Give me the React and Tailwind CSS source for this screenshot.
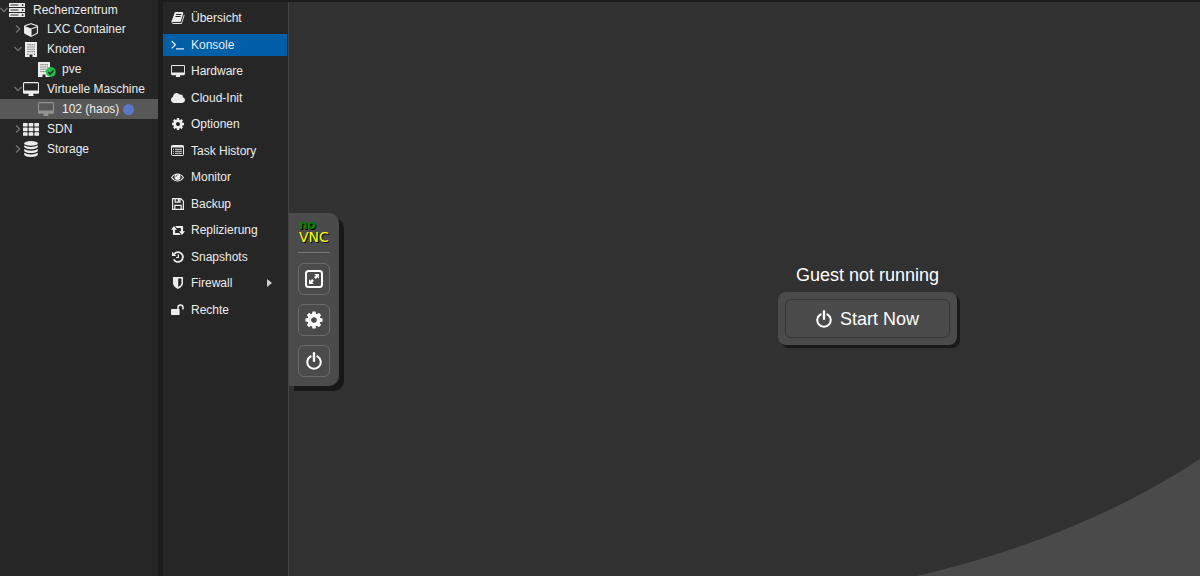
import { useState } from 'react';
import { FaCloud } from 'react-icons/fa';

function ServerIcon() {
  return (
    <svg viewBox="0 0 16 14" className="h-[14px] w-4">
      {[0, 5, 10].map((y) => (
        <g key={y}>
          <rect y={y} width="16" height="4" rx="0.6" fill="currentColor" />
          <path d={`M1.5 ${y + 2}h8`} stroke="#262626" strokeWidth="1" />
          <circle cx="13.6" cy={y + 2} r="0.9" fill="#262626" />
        </g>
      ))}
    </svg>
  );
}

function CubeIcon() {
  return (
    <svg viewBox="0 0 1664 1792" className="h-[15px] w-[14px]" fill="currentColor">
      <path d="M896 1629l640-349v-636l-640 233v752zm-64-865l698-254-698-254-698 254zm832-252v768q0 35-18 65t-49 47l-704 384q-28 16-61 16t-61-16l-704-384q-31-17-49-47t-18-65v-768q0-40 23-73t61-47l704-256q22-8 44-8t44 8l704 256q38 14 61 47t23 73z" />
    </svg>
  );
}

function BuildingIcon() {
  return (
    <svg viewBox="0 0 12 15" className="h-[15px] w-3">
      <path d="M0 0h12v15H7.500v-2.500h-3V15H0z" fill="currentColor" />
      <path d="M2.500 2.700h7.500M2.500 5h7.500M2.500 7.300h7.500M2.500 9.600h7.500" stroke="#262626" strokeWidth="0.900" strokeDasharray="1 1.050" />
      <path d="M2.200 12.200h1.100M8.900 12.200h1.100" stroke="#262626" strokeWidth="0.900" />
    </svg>
  );
}

function NodeOnlineIcon() {
  return (
    <svg viewBox="0 0 18 15" className="h-[15px] w-[18px]">
      <path d="M0 0h12v15H7.500v-2.500h-3V15H0z" fill="currentColor" />
      <path d="M2.500 2.700h7.500M2.500 5h7.500M2.500 7.300h7.500M2.500 9.600h7.500" stroke="#262626" strokeWidth="0.900" strokeDasharray="1 1.050" />
      <circle cx="12.800" cy="10" r="4.900" fill="#21bf4b" />
      <path d="M10.400 10.200l1.800 1.800 3.200-3.500" fill="none" stroke="#262626" strokeWidth="1.600" />
    </svg>
  );
}

function DesktopIcon({ className = 'h-[14px] w-4' }) {
  return (
    <svg viewBox="-64 0 1920 1664" className={className} fill="currentColor">
      <path d="M1728 992v-832q0-13-9.5-22.5t-22.5-9.5h-1600q-13 0-22.5 9.5t-9.5 22.5v832q0 13 9.5 22.5t22.5 9.5h1600q13 0 22.5-9.5t9.5-22.5zm128-832v1088q0 66-47 113t-113 47h-544q0 37 16 77.5t32 71 16 43.5q0 26-19 45t-45 19h-512q-26 0-45-19t-19-45q0-14 16-44t32-70 16-78h-544q-66 0-113-47t-47-113v-1088q0-66 47-113t113-47h1600q66 0 113 47t47 113z" />
    </svg>
  );
}

function GridIcon() {
  return (
    <svg viewBox="0 0 16 13" className="h-[13px] w-4" fill="currentColor">
      {[0, 4.6, 9.2].map((y) => [0, 5.7, 11.4].map((x) => <rect key={`${x}-${y}`} x={x} y={y} width="4.6" height="3.6" rx="0.6" />))}
    </svg>
  );
}

function DatabaseIcon() {
  return (
    <svg viewBox="0 0 14 16" className="h-4 w-[14px]" fill="currentColor">
      <ellipse cx="7" cy="2.4" rx="6.8" ry="2.4" />
      <path d="M.2 4.2q2.4 1.7 6.8 1.7t6.8-1.7v1.9Q12.4 8.200 7 8.200T.2 6.100z" />
      <path d="M.2 8q2.400 1.700 6.800 1.700t6.800-1.700v1.900Q12.400 12 7 12T.2 9.900z" />
      <path d="M.2 11.800q2.400 1.700 6.800 1.700t6.800-1.700v1.900Q12.400 15.900 7 15.900T.2 13.700z" />
    </svg>
  );
}

function BookIcon() {
  return (
    <svg viewBox="0 0 1792 1792" className="h-[14px] w-[14px]" fill="currentColor">
      <path d="M1703 478q40 57 18 129l-275 906q-19 64-76.5 107.5t-122.5 43.5h-923q-77 0-148.5-53.5t-99.5-131.500q-24-67-2-127 0-4 3-27t4-37q1-8-3-21.500t-3-19.500q2-11 8-21t16.500-23.500 16.500-23.500q23-38 45-91.500t30-91.500q3-10 .5-30t-.5-28q3-11 17-28t17-23q21-36 42-92t25-90q1-9-2.500-32t.5-28q4-13 22-30.500t22-22.500q19-26 42.500-84.500t27.500-96.500q1-8-3-25.500t-2-26.500q2-8 9-18t18-23 17-21q8-12 16.500-30.500t15-35 16-36 19.500-32 26.500-23.500 36-11.500 47.500 5.500l-1 3q38-9 51-9h761q74 0 114 56t18 130l-274 906q-36 119-71.500 153.500t-128.500 34.500h-869q-27 0-38 15-11 16-1 43 24 70 144 70h923q29 0 56-15.500t35-41.500l300-987q7-22 5-57 38 15 59 43zm-1064 2q-4 13 2 22.500t20 9.500h608q13 0 25.500-9.500t16.500-22.500l21-64q4-13-2-22.500t-20-9.500h-608q-13 0-25.500 9.500t-16.500 22.500zm-83 256q-4 13 2 22.500t20 9.500h608q13 0 25.500-9.500t16.500-22.500l21-64q4-13-2-22.500t-20-9.500h-608q-13 0-25.500 9.500t-16.500 22.500z" />
    </svg>
  );
}

function TerminalIcon() {
  return (
    <svg viewBox="0 0 13 10" className="h-[10px] w-[13px]" fill="none" stroke="currentColor" strokeWidth="1.3">
      <path d="M.7 1l3.700 3.700L.7 8.400M5 8.800h8" />
    </svg>
  );
}

function CogIcon({ className = 'h-[14px] w-[14px]' }) {
  return (
    <svg viewBox="0 0 1792 1792" className={className} fill="currentColor">
      <path d="M1152 896q0-106-75-181t-181-75-181 75-75 181 75 181 181 75 181-75 75-181zm512-109v222q0 12-8 23t-20 13l-185 28q-19 54-39 91 35 50 107 138 10 12 10 25t-9 23q-27 37-99 108t-94 71q-12 0-26-9l-138-108q-44 23-91 38-16 136-29 186-7 28-36 28h-222q-14 0-24.500-8.500t-11.500-21.500l-28-184q-49-16-90-37l-141 107q-10 9-25 9-14 0-25-11-126-114-165-168-7-10-7-23 0-12 8-23 15-21 51-66.500t54-70.500q-27-50-41-99l-183-27q-13-2-21-12.500t-8-23.500v-222q0-12 8-23t19-13l186-28q14-46 39-92-40-57-107-138-10-12-10-24 0-10 9-23 26-36 98.500-107.500t94.500-71.500q13 0 26 10l138 107q44-23 91-38 16-136 29-186 7-28 36-28h222q14 0 24.500 8.500t11.500 21.500l28 184q49 16 90 37l142-107q9-9 24-9 13 0 25 10 129 119 165 170 7 8 7 22 0 12-8 23-15 21-51 66.500t-54 70.500q26 50 41 98l183 28q13 2 21 12.500t8 23.500z" />
    </svg>
  );
}

function ListIcon() {
  return (
    <svg viewBox="0 0 13 11" className="h-[11px] w-[13px]" fill="none" stroke="currentColor">
      <rect x="0.500" y="0.500" width="12" height="10" rx="1" />
      <path d="M0.500 1.500h12" strokeWidth="2" />
      <path d="M2 4.300h1M4 4.300h7M2 6.300h1M4 6.300h7M2 8.300h1M4 8.300h7" strokeWidth="0.900" />
    </svg>
  );
}

function EyeIcon() {
  return (
    <svg viewBox="0 0 13 9" className="h-[9px] w-[13px]">
      <path d="M.6 4.500Q3 1 6.500 1t5.900 3.500Q10 8 6.500 8T.6 4.500z" fill="none" stroke="currentColor" strokeWidth="1.100" />
      <circle cx="6.500" cy="3.900" r="3" fill="currentColor" />
      <path d="M4.900 3.900a1.600 1.600 0 0 1 1.600-1.600" fill="none" stroke="#262626" strokeWidth="0.700" />
    </svg>
  );
}

function FloppyIcon() {
  return (
    <svg viewBox="0 0 12 12" className="h-3 w-3" fill="none" stroke="currentColor" strokeWidth="1.200">
      <path d="M.6.6h8.200l2.600 2.600v8.200H.6z" />
      <path d="M2.800 11.200V7.400h6.400v3.800M3.200.8v3.400h4.800V.8" />
      <path d="M6.500.8v3" strokeWidth="1.600" />
    </svg>
  );
}

function RetweetIcon() {
  return (
    <svg viewBox="0 0 14 9" className="h-[9px] w-[14px]" fill="currentColor">
      <path d="M3 0l3 3.700H4.100v3.200h4.100l1.600 2H2.500q-.6 0-.6-.6V3.700H0zM11 9L8 5.300h1.900V2.100H5.800l-1.600-2h7.300q.6 0 .6.600v4.600H14z" />
    </svg>
  );
}

function HistoryIcon() {
  return (
    <svg viewBox="0 0 12 12" className="h-3 w-3" fill="none" stroke="currentColor">
      <path d="M2.100 3.100a4.900 4.900 0 1 1-.4 5.300" strokeWidth="1.800" />
      <path d="M0 .7v4.300h4.300z" fill="currentColor" stroke="none" />
      <path d="M6.400 3.200v3.300H4" strokeWidth="1.200" />
    </svg>
  );
}

function ShieldIcon() {
  return (
    <svg viewBox="0 0 10 12" className="h-3 w-[10px]">
      <path d="M0 0h10v6.200Q10 9.500 5 12 0 9.500 0 6.200z" fill="currentColor" />
      <path d="M5.200 1.600h3.200v4.600q0 2-3.200 3.900z" fill="#262626" />
    </svg>
  );
}

function UnlockIcon() {
  return (
    <svg viewBox="0 0 13 11" className="h-[11px] w-[13px]">
      <rect y="5" width="8.600" height="6" rx="0.700" fill="currentColor" />
      <path d="M7 5.500V3.400a2.500 2.500 0 0 1 5 0v2.100" fill="none" stroke="currentColor" strokeWidth="1.500" />
    </svg>
  );
}

function PowerIcon({ className }) {
  return (
    <svg viewBox="0 0 16 18" className={className} fill="none" stroke="currentColor" strokeWidth="2" strokeLinecap="round">
      <path d="M4.600 4.300a6.700 6.700 0 1 0 6.800 0" />
      <path d="M8 1.300v7.500" strokeWidth="2.400" />
    </svg>
  );
}

function FullscreenIcon() {
  return (
    <svg viewBox="0 0 18 18" className="h-[18px] w-[18px]">
      <rect x="1" y="1" width="16" height="16" rx="2.500" fill="none" stroke="currentColor" strokeWidth="2" />
      <path d="M9.300 4h4.700v4.700l-1.500-1.500-1.700 1.700-1.700-1.700 1.700-1.700zM4 9.300l1.500 1.500 1.700-1.700 1.700 1.700-1.700 1.700L8.700 14H4z" fill="currentColor" />
    </svg>
  );
}

function Chevron({ open }) {
  return (
    <svg viewBox="0 0 8 8" className="h-2 w-2 shrink-0" fill="none" stroke="#777777" strokeWidth="1.2">
      {open ? <path d="M.5 2l3.500 3.700L7.500 2" /> : <path d="M2 .5l3.700 3.500L2 7.500" />}
    </svg>
  );
}

const tree = [
  { label: 'Rechenzentrum', icon: <ServerIcon />, open: true, indent: 'h-[19px] gap-[1px] pl-0' },
  { label: 'LXC Container', icon: <CubeIcon />, open: false, indent: 'h-5 gap-[1px] pl-[14px]' },
  { label: 'Knoten', icon: <BuildingIcon />, open: true, indent: 'h-5 gap-[1px] pl-[14px]' },
  { label: 'pve', icon: <NodeOnlineIcon />, indent: 'h-5 pl-[38px]' },
  { label: 'Virtuelle Maschine', icon: <DesktopIcon />, open: true, indent: 'h-5 gap-[1px] pl-[14px]' },
  { label: '102 (haos)', icon: <DesktopIcon className="h-[14px] w-4 text-[#929292]" />, dot: true, indent: 'h-5 pl-[38px]' },
  { label: 'SDN', icon: <GridIcon />, open: false, indent: 'h-5 gap-[1px] pl-[14px]' },
  { label: 'Storage', icon: <DatabaseIcon />, open: false, indent: 'h-5 gap-[1px] pl-[14px]' },
];

const menu = [
  { label: 'Übersicht', icon: <BookIcon /> },
  { label: 'Konsole', icon: <TerminalIcon /> },
  { label: 'Hardware', icon: <DesktopIcon className="h-3 w-[14px]" /> },
  { label: 'Cloud-Init', icon: <FaCloud className="h-[14px] w-[14px]" /> },
  { label: 'Optionen', icon: <CogIcon /> },
  { label: 'Task History', icon: <ListIcon /> },
  { label: 'Monitor', icon: <EyeIcon /> },
  { label: 'Backup', icon: <FloppyIcon /> },
  { label: 'Replizierung', icon: <RetweetIcon /> },
  { label: 'Snapshots', icon: <HistoryIcon /> },
  { label: 'Firewall', icon: <ShieldIcon />, submenu: true },
  { label: 'Rechte', icon: <UnlockIcon /> },
];

function ResourceTree() {
  const [selected, setSelected] = useState('102 (haos)');

  return (
    <nav className="w-[158px] shrink-0">
      {tree.map((node) => (
        <button
          key={node.label}
          onClick={() => setSelected(node.label)}
          className={`flex w-full items-center whitespace-nowrap ${node.indent} ${selected === node.label ? 'bg-[#585858]' : ''}`}
        >
          {node.open !== undefined ? <Chevron open={node.open} /> : null}
          <span className={`flex shrink-0 items-center ${node.open === undefined ? 'w-6' : 'w-[23px]'}`}>
            <span className={`flex ${node.open === undefined ? '' : 'w-4 justify-center'}`}>{node.icon}</span>
          </span>
          {node.label}
          {node.dot ? <span className="ml-1 h-[11px] w-[11px] rounded-full bg-[#5b78c7]" /> : null}
        </button>
      ))}
    </nav>
  );
}

function SideMenu() {
  const [active, setActive] = useState('Konsole');

  return (
    <nav className="w-[125px] shrink-0 pt-[3px] pr-px">
      <div className="grid h-[318px] auto-rows-fr items-center">
        {menu.map((item) => (
          <button
            key={item.label}
            onClick={() => setActive(item.label)}
            className={`flex h-[22px] w-full items-center pr-[15px] pl-[7px] ${active === item.label ? 'bg-[#005fa6]' : ''}`}
          >
            <span className="mr-[6px] flex w-[15px] justify-center">{item.icon}</span>
            {item.label}
            {item.submenu ? (
              <svg viewBox="0 0 5 8" className="ml-auto h-2 w-[5px]" fill="#d0d0d0">
                <path d="M0 0l5 4-5 4z" />
              </svg>
            ) : null}
          </button>
        ))}
      </div>
    </nav>
  );
}

function ControlButton({ label, children }) {
  return (
    <button aria-label={label} className="flex h-8 w-8 items-center justify-center rounded-md border border-[#6a6a6a] text-white">
      {children}
    </button>
  );
}

function ControlBar() {
  return (
    <aside className="absolute top-[211px] left-0 flex w-[50px] flex-col items-center rounded-r-[10px] bg-[#4b4b4b] pt-[7px] pb-[9px] shadow-[5px_5px_0_#181818]">
      <div className="flex w-8 flex-col pl-px font-['DejaVu_Sans',sans-serif] [text-shadow:1px_1px_0_#000]">
        <span className="text-[12px] leading-[10px] font-bold text-[#008000]">no</span>
        <span className="text-[14px] leading-[14px] text-[#ffff00]">VNC</span>
      </div>
      <hr className="mt-2 mb-[10px] w-8 border-[#777777]" />
      <div className="flex flex-col gap-[9px]">
        <ControlButton label="Fullscreen"><FullscreenIcon /></ControlButton>
        <ControlButton label="Settings"><CogIcon className="h-5 w-5" /></ControlButton>
        <ControlButton label="Power"><PowerIcon className="h-[18px] w-4" /></ControlButton>
      </div>
    </aside>
  );
}

function Console() {
  return (
    <main className="relative min-w-0 flex-1 overflow-hidden border-l border-[#444444] bg-[#313131]">
      <svg viewBox="0 0 283 117" className="absolute right-0 bottom-0 h-[117px] w-[283px]">
        <path d="M0 117Q164 78.500 283 0V117z" fill="#4a4a4a" />
      </svg>
      <ControlBar />
      <div className="flex w-[127%] flex-col items-center pt-[260px] text-lg text-white">
        <p className="leading-[27px]">Guest not running</p>
        <div className="mt-[3px] rounded-lg bg-[#4b4b4b] p-[7px] shadow-[3px_3px_0_#181818]">
          <button className="flex h-[39px] w-[165px] items-center justify-center gap-2 rounded-md border border-[#353535]">
            <PowerIcon className="h-[18px] w-4" />
            Start Now
          </button>
        </div>
      </div>
    </main>
  );
}

export default function App() {
  return (
    <div className="flex h-screen overflow-hidden bg-[#262626] font-['Liberation_Sans',Arial,sans-serif] text-xs text-[#ececec]">
      <ResourceTree />
      <div className="w-[5px] shrink-0 bg-[#1c1c1c]" />
      <div className="flex min-w-0 flex-1 border-t-2 border-[#1c1c1c]">
        <SideMenu />
        <Console />
      </div>
    </div>
  );
}
